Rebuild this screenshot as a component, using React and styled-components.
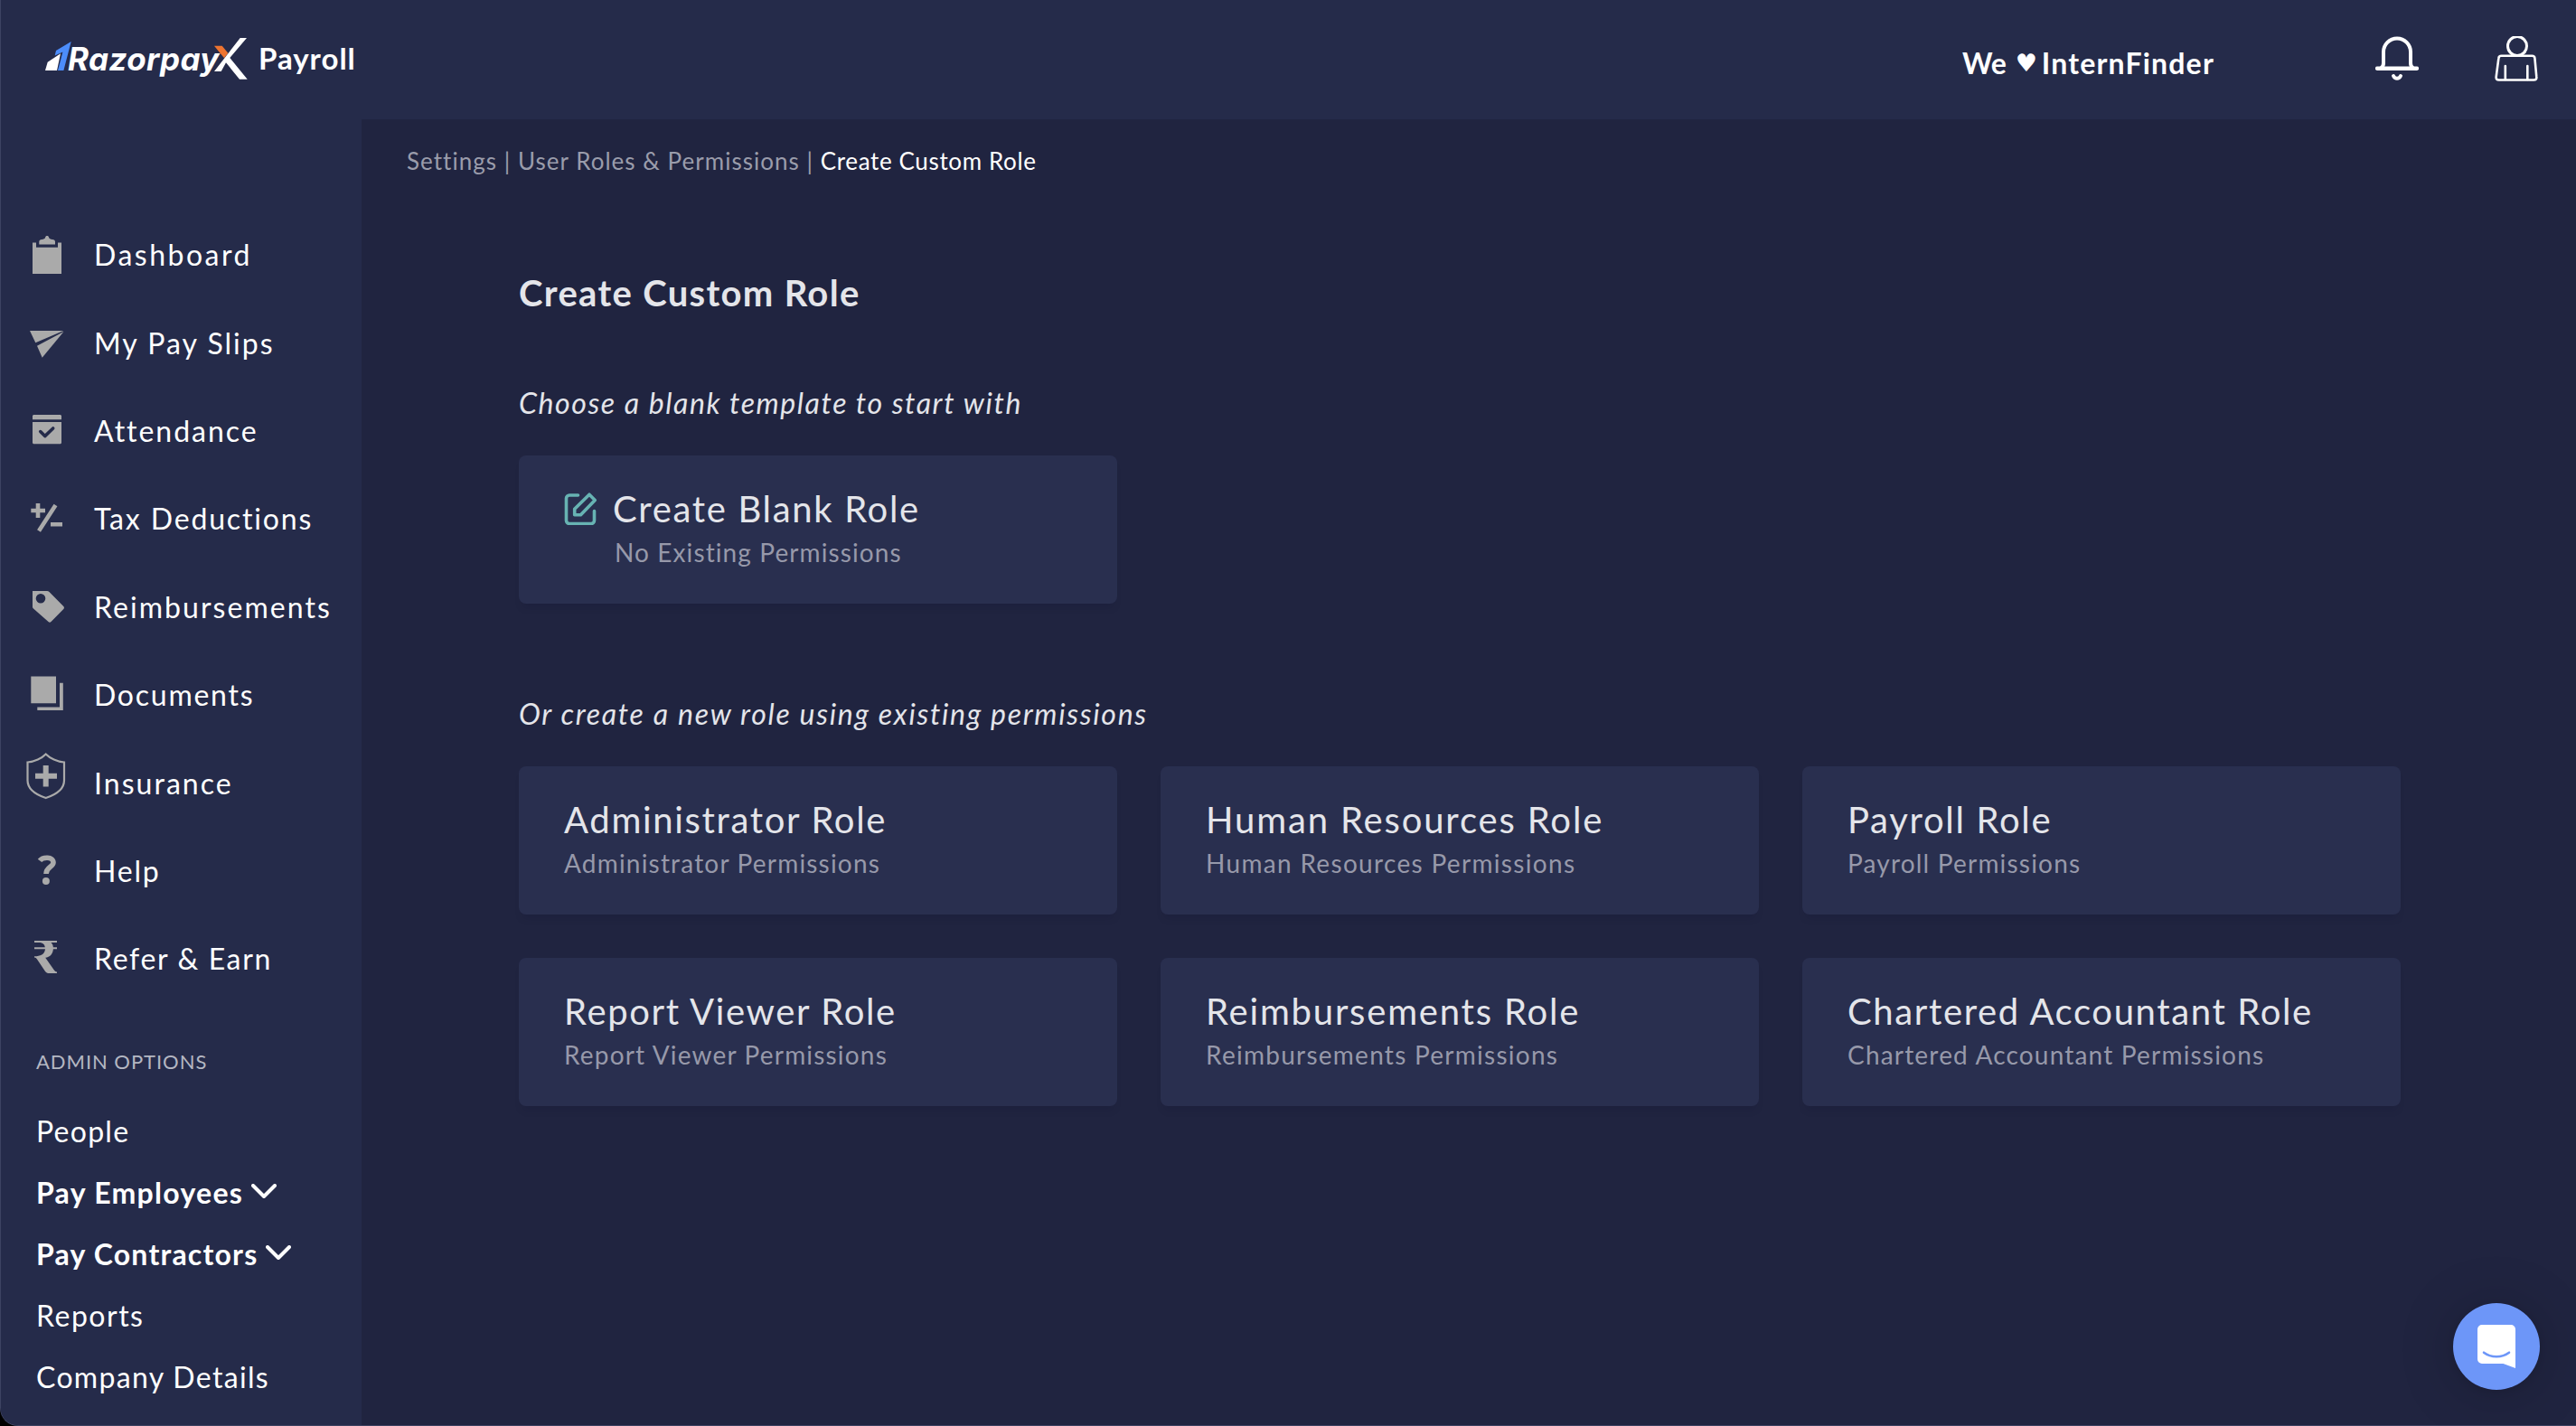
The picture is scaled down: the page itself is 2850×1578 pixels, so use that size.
import styled, { createGlobalStyle } from "styled-components";

const GlobalStyle = createGlobalStyle`
  * {
    box-sizing: border-box;
  }

  body {
    margin: 0;
    background: #000;
    font-family: Lato, "Open Sans", sans-serif;
    color: #fff;
  }

  h1, h2, h3, p {
    margin: 0;
    font-weight: 400;
  }
`;

const navItems = [
  { label: "Dashboard", icon: ClipboardIcon, track: 2.5 },
  { label: "My Pay Slips", icon: PlaneIcon, track: 2 },
  { label: "Attendance", icon: CalendarIcon, track: 1.97 },
  { label: "Tax Deductions", icon: PlusMinusIcon, track: 1.85 },
  { label: "Reimbursements", icon: TagIcon, track: 2.05 },
  { label: "Documents", icon: CopyIcon, track: 1.75 },
  { label: "Insurance", icon: ShieldIcon, track: 2.05 },
  { label: "Help", icon: QuestionIcon, track: 1.8 },
  { label: "Refer & Earn", icon: RupeeIcon, track: 1.65 },
];

const adminItems = [
  { label: "People", track: 1.25 },
  { label: "Pay Employees", track: 1.3, open: true },
  { label: "Pay Contractors", track: 1.2, open: true },
  { label: "Reports", track: 1.5 },
  { label: "Company Details", track: 1.33 },
];

const roles = [
  { name: "Administrator Role", text: "Administrator Permissions", track: 1.68, subTrack: 1.19 },
  { name: "Human Resources Role", text: "Human Resources Permissions", track: 1.85, subTrack: 1.32 },
  { name: "Payroll Role", text: "Payroll Permissions", track: 1.69, subTrack: 1.19 },
  { name: "Report Viewer Role", text: "Report Viewer Permissions", track: 1.63, subTrack: 1.18 },
  { name: "Reimbursements Role", text: "Reimbursements Permissions", track: 1.8, subTrack: 1.26 },
  { name: "Chartered Accountant Role", text: "Chartered Accountant Permissions", track: 1.64, subTrack: 1.19 },
];

function ClipboardIcon() {
  return (
    <NavIcon viewBox="0 0 44 52">
      <path d="M6 13.4h4v5.3h24v-5.3h4V48H6z" />
      <path d="M13.3 15.6v-3.2c0-1.6 1-2.2 3-2.4 2-.2 3.5-.8 3.8-2.2.3-1.3.8-1.8 2-1.8s1.700.5 2 1.800c.3 1.400 1.800 2 3.800 2.200 2 .2 3.100.8 3.100 2.400v3.200z" />
    </NavIcon>
  );
}

function PlaneIcon() {
  return (
    <NavIcon viewBox="0 0 44 52">
      <path d="M3 14h37.3L9.3 27.3z" />
      <path d="M11 30.7L40.5 15 16.7 43.7z" />
    </NavIcon>
  );
}

function CalendarIcon() {
  return (
    <NavIcon viewBox="0 0 44 52">
      <path d="M7 10h30l1 1v4.3H6V11zM6 18h32v23.3l-1 1H7l-1-1z" />
      <path d="M14.7 28.6l5 5 9-8.6" fill="none" stroke="#252b4a" strokeWidth="3.6" strokeLinecap="round" strokeLinejoin="round" />
    </NavIcon>
  );
}

function PlusMinusIcon() {
  return (
    <NavIcon viewBox="0 0 44 52">
      <path d="M12 10v16M4.3 18H20M31.5 12L13 40.5M26 33.3h13" fill="none" stroke="#aaa" strokeWidth="4.6" />
    </NavIcon>
  );
}

function TagIcon() {
  return (
    <NavIcon viewBox="0 0 44 52">
      <path fillRule="evenodd" d="M6 10h16c1 0 1.8.4 2.5 1.1L40.3 27c.9.9.9 2.1 0 3L26.5 44c-.9.9-2.1.9-3 0L7 29.5c-.7-.7-1-1.2-1-2.2zM15 13a5.3 5.3 0 1 0 0 10.6A5.3 5.3 0 0 0 15 13z" />
    </NavIcon>
  );
}

function CopyIcon() {
  return (
    <NavIcon viewBox="0 0 44 52">
      <path d="M4.3 6.4H32v29.8H4.3zM36 13.7h3.8V44H11.3v-3.6H36z" />
    </NavIcon>
  );
}

function ShieldIcon() {
  return (
    <NavIcon viewBox="0 0 44 52">
      <path d="M20.7-4.5C16.5 0 8 3.8.5 4.5v20C.5 35 10 40.5 20.7 44 31.5 40.5 41 35 41 24.5v-20C33.5 3.8 25 0 20.7-4.5z" fill="none" stroke="#aaa" strokeWidth="2.2" />
      <path d="M17.7 8h6v8.800H33v6h-9.300v8.800h-6v-8.800H9v-6h8.700z" />
    </NavIcon>
  );
}

function QuestionIcon() {
  return (
    <NavIcon viewBox="0 0 44 52">
      <path d="M14 16.4C17.2 12.2 29 11.5 29 18.5c0 5-8 5-8 12.5" fill="none" stroke="#aaa" strokeWidth="5.6" />
      <circle cx="20.9" cy="38.9" r="4" />
    </NavIcon>
  );
}

function RupeeIcon() {
  return (
    <NavIcon viewBox="0 0 44 52">
      <path d="M8 7h25v2h-6.500c1.500 1.500 2.200 3 2.400 5.300H33v1.900h-4.100c-.5 5.500-3.700 9-8.700 9.600L29.500 39c1 1.500 2 2.200 3.500 2.600V43h-8.500c-2 0-3.500-.7-4.600-2.300L11 27.500c-.8-1.200-1.500-1.600-3-1.900v-1.300c6.500-.3 11.500-2 12-8.100H8v-1.900h11.800C19.300 10.500 17 9 12.500 9H8z" />
    </NavIcon>
  );
}

function LogoMark() {
  return (
    <MarkSvg viewBox="50 41 25 48">
      <path d="M78.7 46L62 56l-1.3 5.4 8.7-4L64 78h6.400z" fill="#4c8dfb" />
      <path d="M50 78l2.700-9.300L67 59.300 63 78z" fill="#fff" />
    </MarkSvg>
  );
}

function LogoCross() {
  return (
    <CrossSvg viewBox="237 41 37 48">
      <path d="M237 50.700h8.700l6.600 8-4.300 5.600z" fill="#ee7430" />
      <path d="M237 79l28.700-37h7.300l-18.700 22 19.400 23.700H265l-15-18.500-5.300 9.800z" fill="#fff" />
    </CrossSvg>
  );
}

function BellIcon() {
  return (
    <HeaderSvg viewBox="2628 40 48 50">
      <path d="M2630 75.700h44" strokeWidth="4.400" />
      <path d="M2634.500 75c2-1.500 2.500-3 2.500-5V57.500a15 15 0 0 1 30 0V70c0 2 .5 3.500 2.500 5" strokeWidth="4" />
      <path d="M2648 84c1.800 3.800 6.200 3.800 8 0" strokeWidth="4" />
    </HeaderSvg>
  );
}

function UserIcon() {
  return (
    <HeaderSvg viewBox="2760 40 48 50">
      <circle cx="2785" cy="51" r="10.500" strokeWidth="3" />
      <path d="M2778 61.800h-10.500c-2 0-2.900.7-3.100 2.600l-2.700 20.500c-.3 2.400.7 3.600 3 3.600h38.600c2.300 0 3.300-1.200 3-3.600l-1.900-20.500c-.2-1.900-1.100-2.600-3.100-2.600H2778z" strokeWidth="2.600" />
      <path d="M2771.800 73v15M2796.300 73v15" strokeWidth="2.600" />
    </HeaderSvg>
  );
}

function EditIcon() {
  return (
    <EditSvg viewBox="624 544.500 36 36">
      <path d="M639.500 547.500H630a3.500 3.500 0 0 0-3.500 3.500v24.500a3.500 3.500 0 0 0 3.500 3.500h24a3.500 3.500 0 0 0 3.500-3.500V565" />
      <path d="M652 546.700l6.200 6.200-15.700 16.300h-6.800v-6.500z" />
    </EditSvg>
  );
}

function RoleCard({ name, text, track, subTrack, blank }) {
  return (
    <Card>
      <CardHead>
        {blank && <EditIcon />}
        <CardTitle $track={track}>{name}</CardTitle>
      </CardHead>
      <CardText $track={subTrack} $indent={blank}>{text}</CardText>
    </Card>
  );
}

function App() {
  return (
    <Window>
      <GlobalStyle />
      <Header>
        <Logo>
          <LogoMark />
          <Wordmark>Razorpay</Wordmark>
          <LogoCross />
          <Product>Payroll</Product>
        </Logo>
        <HeaderRight>
          <Org>
            <span>We</span>
            <Heart>♥</Heart>
            <OrgName>InternFinder</OrgName>
          </Org>
          <BellIcon />
          <UserIcon />
        </HeaderRight>
      </Header>
      <Body>
        <Sidebar>
          {navItems.map(({ label, icon: Icon, track }) => (
            <NavItem key={label}>
              <Icon />
              <Label $track={track}>{label}</Label>
            </NavItem>
          ))}
          <AdminHeading>ADMIN OPTIONS</AdminHeading>
          {adminItems.map(({ label, track, open }) => (
            <AdminItem key={label}>
              <Label $track={track} $bold={open}>{label}</Label>
              {open && (
                <Chevron viewBox="0 0 28 16">
                  <path d="M2 2l12 12L26 2" />
                </Chevron>
              )}
            </AdminItem>
          ))}
        </Sidebar>
        <Main>
          <Breadcrumb>
            Settings | User Roles &amp; Permissions | <Current>Create Custom Role</Current>
          </Breadcrumb>
          <Content>
            <Title>Create Custom Role</Title>
            <Hint $track={1.58}>Choose a blank template to start with</Hint>
            <Grid>
              <RoleCard name="Create Blank Role" text="No Existing Permissions" track={1.68} subTrack={1.1} blank />
            </Grid>
            <Hint $track={1.7} $second>Or create a new role using existing permissions</Hint>
            <Grid>
              {roles.map((role) => (
                <RoleCard key={role.name} {...role} />
              ))}
            </Grid>
          </Content>
        </Main>
      </Body>
      <ChatButton>
        <ChatSvg viewBox="2741 1466 42 48">
          <path d="M2746 1466h32a5 5 0 0 1 5 5v43l-13.500-5H2746a5 5 0 0 1-5-5v-33a5 5 0 0 1 5-5z" fill="#fff" />
          <path d="M2748 1496.700c8 6 20 6 28 0" fill="none" stroke="#6d96f8" strokeWidth="2.600" strokeLinecap="round" />
        </ChatSvg>
      </ChatButton>
    </Window>
  );
}

export default App;

const Window = styled.div`
  width: 2850px;
  height: 1578px;
  display: flex;
  flex-direction: column;
  overflow: hidden;
  background: #202440;
  border-left: 1px solid #3d4362;
  border-bottom: 1px solid #3d4362;
  border-bottom-left-radius: 20px;
`;

const Header = styled.header`
  height: 132px;
  flex: none;
  display: flex;
  justify-content: space-between;
  padding: 40px 42px 0 49px;
  background: #252b4a;
`;

const Logo = styled.div`
  display: flex;
  height: 48px;
  margin-top: 1px;
`;

const MarkSvg = styled.svg`
  width: 25px;
  height: 48px;
  overflow: visible;
`;

const Wordmark = styled.span`
  width: 162px;
  font: italic 700 35px/49px Inter, sans-serif;
  letter-spacing: 0.4px;
  white-space: nowrap;
`;

const CrossSvg = styled.svg`
  width: 37px;
  height: 48px;
  overflow: visible;
`;

const Product = styled.span`
  margin-left: 12px;
  font-size: 33px;
  font-weight: 700;
  line-height: 46px;
  letter-spacing: 1px;
`;

const HeaderRight = styled.div`
  display: flex;
  gap: 84px;
`;

const Org = styled.div`
  display: flex;
  align-items: center;
  height: 59px;
  margin-right: 94px;
  font-size: 32px;
  font-weight: 700;
`;

const Heart = styled.span`
  width: 20px;
  margin: 0 9px 0 10px;
  font-family: "DejaVu Sans", sans-serif;
  font-size: 27px;
  font-weight: 400;
`;

const OrgName = styled.span`
  letter-spacing: 1.18px;
`;

const HeaderSvg = styled.svg`
  width: 48px;
  height: 50px;
  fill: none;
  stroke: #fff;
  stroke-linecap: round;
  stroke-linejoin: round;
`;

const Body = styled.div`
  flex: 1;
  display: flex;
  min-height: 0;
`;

const Sidebar = styled.nav`
  width: 399px;
  flex: none;
  padding-top: 100px;
  background: #252b4a;
`;

const NavItem = styled.div`
  display: flex;
  align-items: center;
  gap: 30px;
  height: 97.4px;
  padding-left: 29px;
`;

const NavIcon = styled.svg`
  width: 44px;
  height: 52px;
  fill: #aaa;
  overflow: visible;
`;

const Label = styled.span`
  padding-top: 2px;
  font-size: 32px;
  font-weight: ${(props) => (props.$bold ? 700 : 400)};
  letter-spacing: ${(props) => props.$track}px;
  white-space: nowrap;
`;

const AdminHeading = styled.h3`
  margin: 50px 0 26px;
  padding-left: 39px;
  font-size: 22px;
  line-height: 32px;
  letter-spacing: 0.95px;
  color: #b4b7c2;
`;

const AdminItem = styled.div`
  display: flex;
  align-items: center;
  gap: 9px;
  height: 68px;
  padding-left: 39px;
`;

const Chevron = styled.svg`
  width: 28px;
  height: 16px;
  margin-top: -2px;
  fill: none;
  stroke: #fff;
  stroke-width: 4;
  stroke-linecap: round;
  stroke-linejoin: round;
`;

const Main = styled.main`
  flex: 1;
  padding-top: 26px;
`;

const Breadcrumb = styled.p`
  padding-left: 50px;
  font-size: 26px;
  line-height: 40px;
  letter-spacing: 1.03px;
  color: #9a9cab;
`;

const Current = styled.span`
  letter-spacing: 0.63px;
  color: #fff;
`;

const Content = styled.section`
  padding: 101px 194px 0 174px;
  color: #e4e5ea;
`;

const Title = styled.h1`
  font-size: 40px;
  font-weight: 700;
  line-height: 50px;
  letter-spacing: 1.32px;
`;

const Hint = styled.p`
  margin: ${(props) => (props.$second ? "102px" : "77px")} 0 38px;
  font-size: 32px;
  font-style: italic;
  line-height: 40px;
  letter-spacing: ${(props) => props.$track}px;
`;

const Grid = styled.div`
  display: grid;
  grid-template-columns: repeat(3, 662px);
  gap: 48px;
`;

const Card = styled.article`
  height: 164px;
  padding: 35px 50px 0;
  border-radius: 8px;
  background: #292f4f;
  box-shadow: 0 8px 10px -4px rgba(10, 12, 40, 0.12);
`;

const CardHead = styled.div`
  display: flex;
  align-items: center;
  gap: 18px;
`;

const CardTitle = styled.h2`
  font-size: 40px;
  line-height: 49px;
  letter-spacing: ${(props) => props.$track}px;
  white-space: nowrap;
`;

const CardText = styled.p`
  margin-top: 5px;
  padding-left: ${(props) => (props.$indent ? "56px" : "0")};
  font-size: 28px;
  line-height: 36px;
  letter-spacing: ${(props) => props.$track}px;
  color: #9799aa;
  white-space: nowrap;
`;

const EditSvg = styled.svg`
  width: 36px;
  height: 36px;
  margin-top: -2px;
  fill: none;
  stroke: #67b3b3;
  stroke-width: 3.6;
  stroke-linecap: round;
  stroke-linejoin: round;
`;

/* floats over the page in the corner */
const ChatButton = styled.button`
  position: fixed;
  right: 40px;
  bottom: 40px;
  width: 96px;
  height: 96px;
  display: flex;
  align-items: center;
  justify-content: center;
  padding: 0;
  border: none;
  border-radius: 50%;
  background: #6d96f8;
  box-shadow: 0 2px 12px rgba(0, 0, 0, 0.1), 0 4px 64px rgba(0, 0, 0, 0.2);
`;

const ChatSvg = styled.svg`
  width: 42px;
  height: 48px;
`;
